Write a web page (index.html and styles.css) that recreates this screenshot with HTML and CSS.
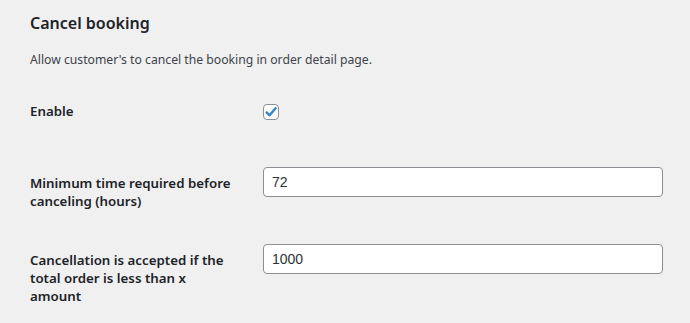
FILE: index.html
```html
<!DOCTYPE html>
<html lang="en">
<head>
  <meta charset="UTF-8">
  <meta name="viewport" content="width=device-width, initial-scale=1.0">
  <title>Cancel booking</title>
  <link rel="stylesheet" href="styles.css">
</head>
<body>
  <div class="wrap">
    <h2>Cancel booking</h2>
    <p class="desc">Allow customer's to cancel the booking in order detail page.</p>

    <table class="form-table">
      <tr class="row-enable">
        <th><label for="enable">Enable</label></th>
        <td>
          <label class="check">
            <input type="checkbox" id="enable" checked>
            <span class="box">
              <svg viewBox="0 0 16 16" width="16" height="16"><path d="M3.6 8.4 L6.6 11.3 L12.6 4.3" fill="none" stroke="#3582c4" stroke-width="2.4" stroke-linecap="round" stroke-linejoin="round"/></svg>
            </span>
          </label>
        </td>
      </tr>
      <tr>
        <th><label for="min-time">Minimum time required before canceling (hours)</label></th>
        <td><input type="text" id="min-time" class="text-input" value="72"></td>
      </tr>
      <tr>
        <th><label for="max-amount">Cancellation is accepted if the total order is less than x amount</label></th>
        <td><input type="text" id="max-amount" class="text-input" value="1000"></td>
      </tr>
    </table>
  </div>
</body>
</html>
```

FILE: styles.css
```css
body {
  margin: 0;
  background-color: #f0f0f1;
  color: #1d2327;
  font-family: "Noto Sans", "Open Sans", sans-serif;
  font-size: 13px;
}
.wrap {
  padding: 0 20px 0 30px;
}
h2 {
  margin: 0;
  padding-top: 13px;
  font-size: 16px;
  font-weight: 600;
  line-height: 1.3;
}
.desc {
  margin: 17px 0 0;
  color: #3c434a;
  font-size: 12.2px;
  line-height: 1.5;
}
.form-table {
  border-collapse: collapse;
  margin-top: 13px;
}
.form-table th {
  width: 205px;
  padding: 22px 28px 19px 0;
  text-align: left;
  vertical-align: top;
  font-size: 13.3px;
  font-weight: 600;
  line-height: 18px;
}
.form-table td {
  padding: 15px 0;
  vertical-align: top;
}
.row-enable th {
  padding-top: 20px;
  padding-bottom: 32px;
}
.row-enable td {
  padding-top: 22px;
}
.check {
  display: inline-block;
  position: relative;
  width: 16px;
  height: 16px;
}
.check input {
  position: absolute;
  opacity: 0;
  margin: 0;
  width: 16px;
  height: 16px;
}
.box {
  display: block;
  box-sizing: border-box;
  width: 16px;
  height: 16px;
  border: 1px solid #8c8f94;
  border-radius: 4px;
  background: #fff;
}
.box svg {
  display: block;
  margin: -1px;
}
.text-input {
  box-sizing: border-box;
  width: 400px;
  height: 30px;
  margin: 0;
  padding: 0 8px;
  border: 1px solid #8c8f94;
  border-radius: 4px;
  background: #fff;
  color: #2c3338;
  font-family: "Liberation Sans", Arial, sans-serif;
  font-size: 14px;
}
```
